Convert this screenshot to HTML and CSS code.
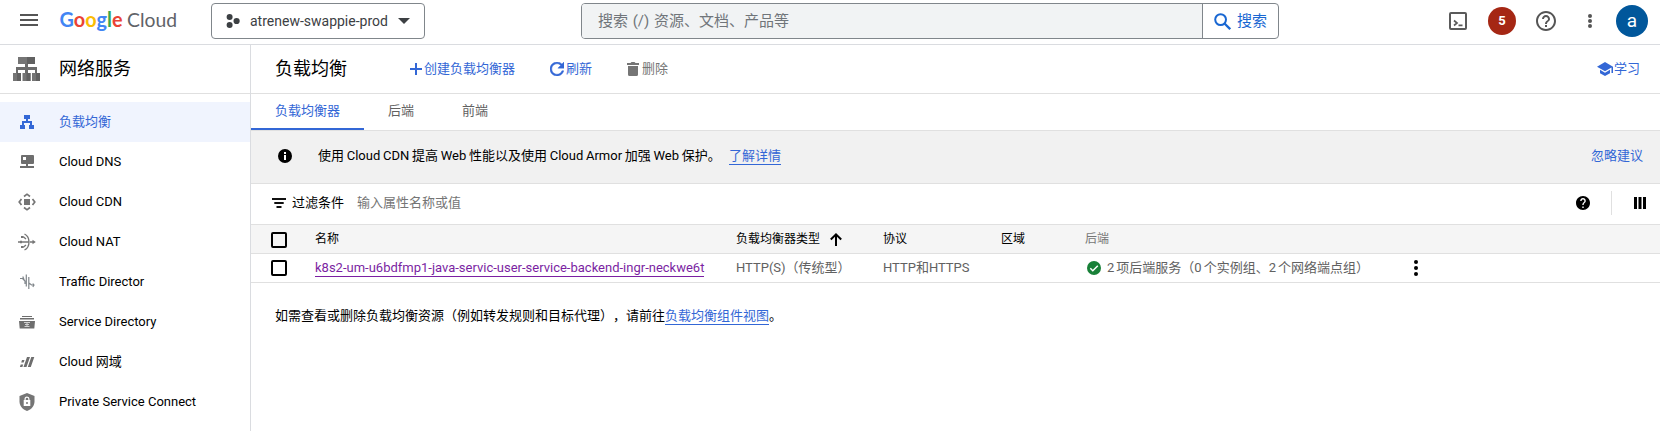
FILE: index.html
```html
<!DOCTYPE html>
<html lang="zh-CN">
<head>
<meta charset="utf-8">
<title>负载均衡</title>
<link rel="stylesheet" href="styles.css">
</head>
<body>
<header class="topbar">
  <svg class="menu" width="18" height="12" viewBox="0 0 18 12"><path d="M0 0h18v2H0zM0 5h18v2H0zM0 10h18v2H0z" fill="#555"/></svg>
  <svg class="logo" width="118" height="26" viewBox="0 0 118 26">
    <text class="logo-google" x="-0.500" y="18" textLength="63" lengthAdjust="spacingAndGlyphs"><tspan fill="#4285f4">G</tspan><tspan fill="#ea4335">o</tspan><tspan fill="#fbbc04">o</tspan><tspan fill="#4285f4">g</tspan><tspan fill="#34a853">l</tspan><tspan fill="#ea4335">e</tspan></text>
    <text class="logo-cloud" x="67" y="18" textLength="50" lengthAdjust="spacingAndGlyphs">Cloud</text>
  </svg>
  <div class="project">
    <svg width="14" height="14" viewBox="0 0 14 14" fill="#3c4043"><circle cx="3.6" cy="3" r="3"/><circle cx="3.6" cy="11" r="3"/><circle cx="10.6" cy="7" r="3.1"/></svg>
    <span class="project-name">atrenew-swappie-prod</span>
    <svg width="12" height="6" viewBox="0 0 12 6"><path d="M0 0h12L6 6z" fill="#3c4043"/></svg>
  </div>
  <div class="search">
    <div class="search-input">搜索 (/) 资源、文档、产品等</div>
    <div class="search-button">
      <svg width="17" height="17" viewBox="0 0 17 17" fill="none" stroke="#1967d2" stroke-width="2"><circle cx="6.6" cy="6.6" r="5.4"/><path d="M10.5 10.5l5.7 5.7" stroke-width="2.3"/></svg>
      <span>搜索</span>
    </div>
  </div>
  <div class="tools">
    <svg class="shell" width="18" height="18" viewBox="0 0 18 18" fill="none" stroke="#5a5a5a" stroke-width="2"><rect x="1" y="1" width="16" height="16" rx="1"/><path d="M5 8.500l3 2.500-3 2.500M9.500 13.300h4" stroke-width="1.700"/></svg>
    <span class="notice">5</span>
    <svg class="help" width="20" height="20" viewBox="2 2 20 20"><path fill="#555" d="M11 18h2v-2h-2v2zm1-16C6.480 2 2 6.480 2 12s4.480 10 10 10 10-4.480 10-10S17.520 2 12 2zm0 18c-4.410 0-8-3.590-8-8s3.590-8 8-8 8 3.590 8 8-3.590 8-8 8zm0-14c-2.210 0-4 1.790-4 4h2c0-1.100.9-2 2-2s2 .9 2 2c0 2-3 1.750-3 5h2c0-2.250 3-2.500 3-5 0-2.210-1.790-4-4-4z"/></svg>
    <svg class="more" width="4" height="14" viewBox="0 0 4 14" fill="#555"><circle cx="2" cy="2" r="2"/><circle cx="2" cy="7" r="2"/><circle cx="2" cy="12" r="2"/></svg>
    <span class="avatar">a</span>
  </div>
</header>
<div class="shell-body">
  <nav class="side">
    <div class="side-head">
      <svg width="27" height="24" viewBox="0 0 27 24"><path d="M5 0h17v7H5z" fill="#757575"/><path d="M14 0h8v7h-8z" fill="#616161"/><path d="M12 7h3v3h9v6h-2v-3h-7v3h-3v-3H5v3H3v-6h9z" fill="#6b6b6b"/><path d="M0 16h8v8H0zM9.500 16h8v8h-8zM19 16h8v8h-8z" fill="#757575"/><path d="M4 16h4v8H4zM13.500 16h4v8h-4zM23 16h4v8h-4z" fill="#616161"/></svg>
      <span>网络服务</span>
    </div>
    <ul class="side-list">
      <li class="side-item active"><svg width="18" height="18" viewBox="0 0 18 18" fill="#3367d6"><path d="M6 2h6v4h-2v2h4v4h2v4h-5v-4h1v-2H6v2h1v4H2v-4h2V8h4V6H6z"/></svg><span>负载均衡</span></li>
      <li class="side-item"><svg width="18" height="18" viewBox="0 0 18 18" fill="#6e6e6e"><path fill-rule="evenodd" d="M4 2h11a1 1 0 0 1 1 1v7a1 1 0 0 1-1 1h-5v2h6v2H2v-2h6v-2H4a1 1 0 0 1-1-1V3a1 1 0 0 1 1-1zm1 2v3h3V4z"/></svg><span>Cloud DNS</span></li>
      <li class="side-item"><svg width="18" height="18" viewBox="0 0 18 18" fill="none" stroke="#757575" stroke-width="1.700"><path d="M6 6h6v6H6z" fill="#757575" stroke="none"/><path d="M6 3.500L9 1.200l3 2.300M6 14.500l3 2.300 3-2.300M3.500 6L1.200 9l2.300 3M14.500 6l2.300 3-2.300 3"/></svg><span>Cloud CDN</span></li>
      <li class="side-item"><svg width="18" height="18" viewBox="0 0 18 18" fill="none" stroke="#757575" stroke-width="1.300"><path d="M6.500 1C9.500 2.500 11 5.500 11 9s-1.500 6.500-4.500 8M0 9h11M12 9h4M3 4h2.500L8 6M3 14h2.500L8 12"/><path d="M2 7.800h2v2.400H2zM3 3h2v2H3zM3 13h2v2H3zM14.500 6.800L17.800 9l-3.300 2.200z" fill="#757575" stroke="none"/></svg><span>Cloud NAT</span></li>
      <li class="side-item"><svg width="18" height="18" viewBox="0 0 18 18" fill="none" stroke="#80868b" stroke-width="1.200"><path d="M2 5.500h2.500L7 8v3M4.800 3.500l1.500 4M8.300 1.500v12M10.800 4v12M11 10l2.500 2H16M14.800 10.500L16 12l-1.200 1.800"/></svg><span>Traffic Director</span></li>
      <li class="side-item"><svg width="18" height="18" viewBox="0 0 18 18"><path d="M4 3h10v1H4zM2 5h14v1.500H2zM1 8h16l-.7 7.500H1.700z" fill="#6e6e6e"/><path d="M6 9.500h6M9 9.500v4M7 11.500h4M6.500 13.500h5" stroke="#d0d0d0" fill="none"/></svg><span>Service Directory</span></li>
      <li class="side-item"><svg width="18" height="18" viewBox="0 0 18 18" fill="#6e6e6e"><path d="M9 4h3L8.500 14h-3zM13.300 4h3l-3.500 10h-3zM4 7h2.500l-.8 2.500H3.200zM2.700 11.500h2.500L4.400 14H1.900z"/></svg><span>Cloud 网域</span></li>
      <li class="side-item"><svg width="18" height="18" viewBox="0 0 18 18"><path d="M9 0l7.500 3v5.500c0 4.300-3 8-7.500 9.500-4.500-1.500-7.500-5.200-7.500-9.500V3z" fill="#757575"/><path fill-rule="evenodd" d="M6.500 7V6a2.500 2.500 0 0 1 5 0v1h.8v6H5.700V7zm1.200 0h2.600V6a1.300 1.300 0 0 0-2.600 0zM9 9a1 1 0 1 0 0 2 1 1 0 0 0 0-2z" fill="#fff"/></svg><span>Private Service Connect</span></li>
    </ul>
  </nav>
  <main class="main">
    <div class="title-row">
      <h1>负载均衡</h1>
      <span class="action create"><svg width="12" height="12" viewBox="0 0 12 12"><path d="M5 0h2v5h5v2H7v5H5V7H0V5h5z" fill="#3367d6"/></svg>创建负载均衡器</span>
      <span class="action refresh"><svg width="14" height="14" viewBox="4 4 16 16"><path fill="#3367d6" stroke="#3367d6" stroke-width=".5" d="M17.650 6.350C16.200 4.900 14.210 4 12 4c-4.420 0-7.990 3.580-7.990 8s3.570 8 7.990 8c3.730 0 6.840-2.550 7.730-6h-2.080c-.82 2.330-3.040 4-5.650 4-3.310 0-6-2.690-6-6s2.690-6 6-6c1.660 0 3.140.69 4.220 1.780L13 11h7V4l-2.350 2.350z"/></svg>刷新</span>
      <span class="action remove"><svg width="12" height="14" viewBox="0 0 12 14"><path d="M0 1h3.500L4.500 0h3l1 1H12v2H0zM1 4h10v8.500a1.500 1.500 0 0 1-1.500 1.500h-7A1.500 1.500 0 0 1 1 12.500z" fill="#757575"/></svg>删除</span>
      <span class="action learn"><svg width="16" height="14" viewBox="0 0 16 14"><path d="M8 0l8 4.700V11h-1.500V5.600L8 9.300 0 4.700zM3 7.800l5 2.900 5-2.900v3.400L8 14l-5-2.800z" fill="#3367d6"/></svg>学习</span>
    </div>
    <div class="tabs">
      <span class="tab selected">负载均衡器</span><span class="tab">后端</span><span class="tab">前端</span>
    </div>
    <div class="banner">
      <svg width="14" height="14" viewBox="0 0 14 14"><circle cx="7" cy="7" r="7"/><path d="M6 3h2v2H6zM6 6h2v5H6z" fill="#fff"/></svg>
      <span class="banner-text">使用 Cloud CDN 提高 Web 性能以及使用 Cloud Armor 加强 Web 保护。</span>
      <a class="link">了解详情</a>
      <span class="dismiss">忽略建议</span>
    </div>
    <div class="filter">
      <svg width="14" height="10" viewBox="0 0 14 10"><path d="M0 0h14v2H0zM2.300 4h9.400v2H2.300zM4.500 8h5v2h-5z" fill="#111"/></svg>
      <span class="filter-label">过滤条件</span>
      <span class="filter-hint">输入属性名称或值</span>
      <svg class="filter-help" width="14" height="14" viewBox="2 2 20 20"><path d="M12 2C6.480 2 2 6.480 2 12s4.480 10 10 10 10-4.480 10-10S17.520 2 12 2zm1 17h-2v-2h2v2zm2.070-7.750l-.9.920C13.450 12.900 13 13.500 13 15h-2v-.5c0-1.100.45-2.100 1.170-2.830l1.240-1.260c.37-.36.59-.86.59-1.410 0-1.100-.9-2-2-2s-2 .9-2 2H8c0-2.210 1.790-4 4-4s4 1.790 4 4c0 .88-.36 1.680-.93 2.250z"/></svg>
      <span class="divider"></span>
      <svg width="12" height="12" viewBox="0 0 12 12"><path d="M0 0h3v12H0zM4.500 0h3v12h-3zM9 0h3v12H9z"/></svg>
    </div>
    <div class="row head">
      <span class="check"></span><span>名称</span>
      <span class="sort">负载均衡器类型<svg width="12" height="13" viewBox="0 0 12 13" fill="none" stroke="#000" stroke-width="2"><path d="M6 13V1.500M.8 6.500L6 1.400l5.200 5.100"/></svg></span>
      <span>协议</span><span>区域</span><span class="muted">后端</span><span></span>
    </div>
    <div class="row data">
      <span class="check"></span><span><a class="visited">k8s2-um-u6bdfmp1-java-servic-user-service-backend-ingr-neckwe6t</a></span>
      <span>HTTP(S)（传统型）</span><span>HTTP和HTTPS</span><span></span>
      <span class="backend"><svg width="14" height="14" viewBox="0 0 14 14"><circle cx="7" cy="7" r="7" fill="#188038"/><path d="M3.300 7.200l2.500 2.500 5-5" fill="none" stroke="#fff" stroke-width="1.500"/></svg><span class="backend-text">2 项后端服务（0 个实例组、2 个网络端点组）</span></span>
      <svg width="4" height="16" viewBox="0 0 4 16"><circle cx="2" cy="2" r="2"/><circle cx="2" cy="8" r="2"/><circle cx="2" cy="14" r="2"/></svg>
    </div>
    <p class="note">如需查看或删除负载均衡资源（例如转发规则和目标代理），请前往<a class="link">负载均衡组件视图</a>。</p>
  </main>
</div>
</body>
</html>
```
FILE: styles.css
```css
* { box-sizing: border-box; }
body {
  margin: 0;
  height: 431px;
  overflow: hidden;
  display: flex;
  flex-direction: column;
  background: #fff;
  color: #000;
  font: 13px/20px Roboto, "Noto Sans CJK SC", sans-serif;
  text-spacing-trim: space-all;
}
svg { display: block; flex: none; }
span, a { white-space: nowrap; }

.topbar {
  flex: none;
  display: flex;
  align-items: flex-start;
  height: 45px;
  border-bottom: 1px solid #dadce0;
}
.menu { margin: 14px 0 0 20px; }
.logo { margin: 9px 0 0 22px; overflow: visible; }
.logo-google { font: 700 20px Lato, sans-serif; }
.logo-cloud { font: 400 20px Lato, sans-serif; fill: #5f6368; }
.project {
  display: flex;
  align-items: center;
  width: 214px;
  height: 36px;
  margin: 3px 0 0 33px;
  padding: 0 14px;
  border: 1px solid #80868b;
  border-radius: 4px;
}
.project-name {
  width: 137px;
  margin: 0 11px 0 10px;
  font-size: 14px;
  color: #3c4043;
}
.search {
  display: flex;
  width: 698px;
  height: 36px;
  margin: 3px 0 0 156px;
  border: 1px solid #80868b;
  border-radius: 4px;
  font-size: 15px;
  line-height: 34px;
}
.search-input {
  flex: 1;
  padding-left: 16px;
  background: #f1f3f4;
  border-radius: 3px 0 0 3px;
  color: #70757a;
  word-spacing: 1px;
}
.search-button {
  display: flex;
  align-items: center;
  gap: 6px;
  width: 76px;
  padding-left: 11px;
  border-left: 1px solid #80868b;
  color: #1967d2;
}
.tools { display: flex; align-items: center; margin-left: 170px; height: 41px; }
.notice, .avatar {
  display: flex;
  align-items: center;
  justify-content: center;
  border-radius: 50%;
  color: #fff;
}
.notice { width: 28px; height: 28px; margin: 0 20px 0 21px; background: #a52714; font-weight: 700; }
.more { margin: 0 24px 0 32px; }
.avatar { width: 32px; height: 32px; margin-top: 1px; background: #01579b; font-size: 19px; }

.shell-body { flex: 1; display: flex; min-height: 0; }
.side { width: 251px; flex: none; border-right: 1px solid #dadce0; }
.side-head {
  display: flex;
  align-items: center;
  gap: 19px;
  height: 49px;
  padding-left: 13px;
  border-bottom: 1px solid #e0e0e0;
  font-size: 18px;
}
.side-list { margin: 8px 0 0; padding: 0; list-style: none; }
.side-item { display: flex; align-items: center; gap: 23px; height: 40px; padding-left: 18px; }
.active { background: #f0f4fe; color: #3367d6; }

.main { flex: 1; min-width: 0; }
.title-row {
  display: flex;
  align-items: center;
  height: 49px;
  padding: 0 20px 0 24px;
  border-bottom: 1px solid #e0e0e0;
}
h1 { margin: 0 63px 0 0; font-size: 18px; font-weight: 400; }
.action { display: flex; align-items: center; color: #3367d6; }
.create { gap: 2px; margin-right: 35px; }
.refresh { gap: 2px; margin-right: 35px; }
.remove { gap: 3px; color: #757575; }
.learn { gap: 1px; margin-left: auto; }

.tabs { display: flex; height: 37px; border-bottom: 1px solid #e0e0e0; line-height: 34px; }
.tab { padding: 0 24px; color: #616161; }
.selected { height: 36px; border-bottom: 2px solid #3367d6; color: #3367d6; }

.banner {
  display: flex;
  align-items: center;
  height: 53px;
  padding: 0 17px 2px 27px;
  background: #f1f1f1;
  border-bottom: 1px solid #e0e0e0;
}
.banner-text { width: 411px; margin-left: 26px; word-spacing: -0.5px; }
.link, .visited { border-bottom: 1px solid; line-height: 17px; display: inline-block; }
.link { color: #3367d6; }
.visited { color: #7b1fa2; }
.dismiss { margin-left: auto; color: #3367d6; }

.filter {
  display: flex;
  align-items: center;
  height: 41px;
  padding: 0 14px 2px 21px;
  border-bottom: 1px solid #e0e0e0;
}
.filter-label { margin: 0 13px 0 6px; }
.filter-hint { color: #757575; }
.filter-help { margin-left: auto; }
.divider { width: 1px; height: 24px; margin: 0 22px 0 21px; background: #e0e0e0; }

.row {
  display: grid;
  grid-template-columns: 44px 421px 147px 118px 84px 329px 1fr;
  align-items: center;
  height: 29px;
  padding-left: 20px;
  border-bottom: 1px solid #e0e0e0;
  color: #616161;
}
.head { background: #f5f5f5; font-size: 12px; color: #000; }
.muted { color: #757575; }
.check { width: 16px; height: 16px; border: 2px solid #000; border-radius: 2px; }
.head .check { margin-top: 2px; }
.sort { display: flex; align-items: center; gap: 10px; }
.backend { display: flex; align-items: center; gap: 6px; padding-left: 2px; }
.backend-text { word-spacing: -1.2px; }
.note { margin: 23px 0 0 24px; }
```
